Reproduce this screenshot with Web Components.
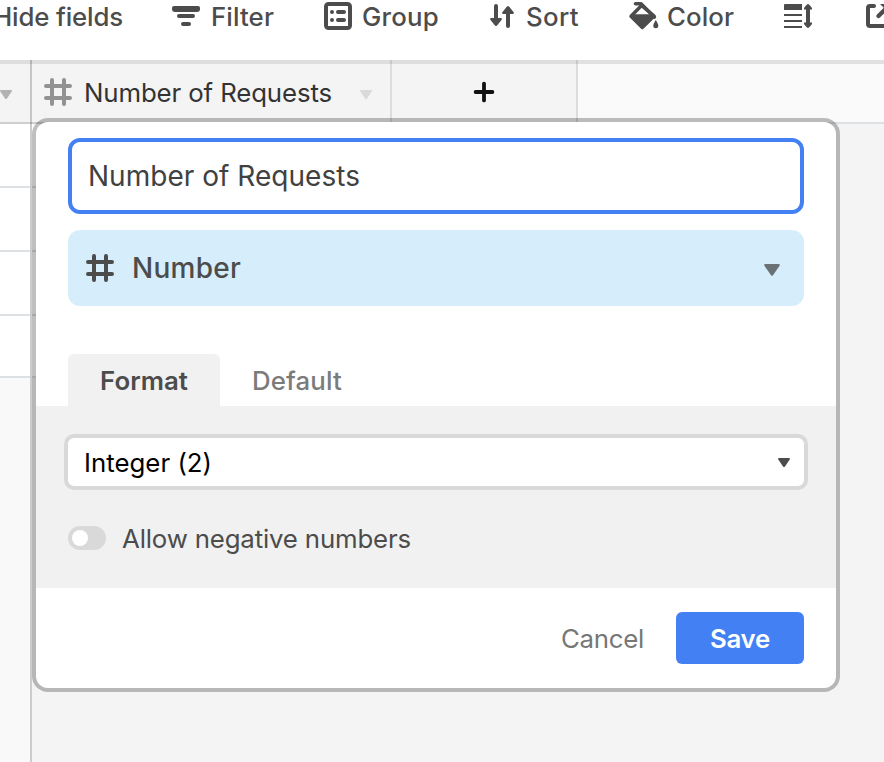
<!DOCTYPE html>
<html lang="en">
<head>
<meta charset="utf-8">
<title>Field editor</title>
<style>
html, body { margin: 0; }
body { width: 884px; height: 762px; overflow: hidden; background: #fff; font-family: Inter, "Liberation Sans", sans-serif; font-size: 25.8px; color: #4c4c4c; }
</style>
</head>
<body>
<app-page></app-page>
<script>
const define = (name, html, ready) => customElements.define(name, class extends HTMLElement {
  constructor() {
    super();
    const t = document.createElement('template');
    t.innerHTML = html;
    this.attachShadow({ mode: 'open' }).append(t.content.cloneNode(true));
  }
  connectedCallback() { if (ready) ready(this, this.shadowRoot); }
});

/* Label whose tracking is adjusted so that it fills the given width. */
define('fit-label', `<style>:host{display:block;white-space:pre;line-height:32px;flex:none}span{display:inline-block;vertical-align:top}</style><span><slot></slot></span>`,
  (el, root) => {
    const s = root.querySelector('span'), w = +el.getAttribute('w');
    el.style.width = w + 'px';
    s.style.letterSpacing = (w - s.getBoundingClientRect().width) / el.textContent.length + 'px';
  });

const ICONS = {
  filter: [28, 22, '<path d="M7 11h14M11 19h6" fill="none" stroke="currentColor" stroke-width="4" stroke-linecap="round"/><path d="M2 1h24q2 0 2 2v1q0 3-3 3H3Q0 7 0 4V3q0-2 2-2z" fill="currentColor"/>'],
  group: [28, 28, '<rect x="2" y="2" width="24" height="24" rx="2.5" fill="none" stroke="currentColor" stroke-width="4"/><path d="M14 10h6M14 18h6M8 10h.01M8 18h.01" fill="none" stroke="currentColor" stroke-width="4" stroke-linecap="round"/>'],
  sort: [24, 24, '<path d="M6 2v17M18 22V5" fill="none" stroke="currentColor" stroke-width="4" stroke-linecap="round"/><path d="M1 14h10q1.500 .5 .5 2L7 21.500q-1 1-2 0L.5 16q-1-1.500 .5-2zM13 10h10q1.500-.5 .5-2L19 2.500q-1-1-2 0L12.500 8q-1 1.500 .5 2z" fill="currentColor"/>'],
  paint: [30, 28, '<path d="M6.500 1.800H12L25.400 15" fill="none" stroke="currentColor" stroke-width="3.600" stroke-linecap="round" stroke-linejoin="round"/><path d="M12.500 3.500L2 14.300l11.300 11.200L25 14z" fill="none" stroke="currentColor" stroke-width="3.400" stroke-linejoin="round"/><path d="M2 12.300h23l1 2.200-12.700 12.400L.8 15z" fill="currentColor"/><path d="M26.800 18c1.500 2.700 2.500 4.200 2.500 5.700a2.500 2.500 0 0 1-5 0c0-1.500 1-3 2.500-5.700z" fill="currentColor"/>'],
  height: [28, 24, '<path d="M1 0h17v6H0V1q0-1 1-1zM0 10h18v2H0zM0 16h18v2H0zM0 22h18v2H0z" fill="currentColor"/><path d="M24 4v16" stroke="currentColor" stroke-width="4"/><path d="M24 0q1 0 4 4v1.500h-8V4q3-4 4-4zM24 24q-1 0-4-4v-1.500h8V20q-3 4-4 4z" fill="currentColor"/>'],
  share: [26, 24, '<path d="M8 2H4Q2 2 2 4v16q0 2 2 2h16q2 0 2-2v-6" fill="none" stroke="currentColor" stroke-width="4" stroke-linecap="round"/><path d="M12.500 12l8-8" stroke="currentColor" stroke-width="4.200" stroke-linecap="round"/><path d="M14 0h10v10z" fill="currentColor"/>'],
  hash: [28, 28, '<path d="M8 2v24M20 2v24M2 8h24M2 20h24" fill="none" stroke="currentColor" stroke-width="4" stroke-linecap="round"/>'],
  plus: [20, 20, '<path d="M10 1.600v16.800M1.600 10h16.800" stroke="currentColor" stroke-width="3.800" stroke-linecap="round"/>'],
  caret: [12, 9, '<path d="M.8 0h10.400q1.200.3.500 1.500L7 8.400Q6 9.500 5 8.400L.3 1.500Q-.4.3.8 0z" fill="currentColor"/>'],
  bigcaret: [16, 12, '<path d="M1 0h14q1.500.4.600 1.800L9 11.200q-1 1.200-2 0L.4 1.800Q-.5.4 1 0z" fill="currentColor"/>']
};
define('ui-icon', `<style>:host{display:block;flex:none}svg{display:block;overflow:visible}</style><svg aria-hidden="true"></svg>`,
  (el, root) => {
    const [w, h, body] = ICONS[el.getAttribute('name')], s = root.querySelector('svg');
    s.setAttribute('width', w); s.setAttribute('height', h); s.setAttribute('viewBox', `0 0 ${w} ${h}`);
    s.innerHTML = body;
  });

define('tool-bar', `<style>
:host{display:flex;align-items:flex-start;height:60px;box-sizing:border-box;overflow:hidden;font-weight:500;background:#fff;color:#4c4c4c}
.item{display:flex;align-items:flex-start;flex:none}
fit-label{margin-top:1px}
</style>
<div class="item" style="margin-left:-7px"><fit-label w="130">Hide fields</fit-label></div>
<div class="item" style="margin-left:49px;gap:11px"><ui-icon name="filter" style="margin-top:5px"></ui-icon><fit-label w="63">Filter</fit-label></div>
<div class="item" style="margin-left:50px;gap:10px"><ui-icon name="group" style="margin-top:2px"></ui-icon><fit-label w="77">Group</fit-label></div>
<div class="item" style="margin-left:51px;gap:12px"><ui-icon name="sort" style="margin-top:4px"></ui-icon><fit-label w="53">Sort</fit-label></div>
<div class="item" style="margin-left:50px;gap:8px"><ui-icon name="paint" style="margin-top:2px"></ui-icon><fit-label w="67">Color</fit-label></div>
<div class="item" style="margin-left:50px"><ui-icon name="height" style="margin-top:4px"></ui-icon></div>
<div class="item" style="margin-left:54px"><ui-icon name="share" style="margin-top:4px"></ui-icon></div>`);

define('grid-head', `<style>
:host{display:flex;height:64px;box-sizing:border-box;background:linear-gradient(#dedede 4px,#f4f4f4 4px 62px,#cfcfcf 62px)}
div{display:flex;align-items:center;box-sizing:border-box;border-right:2px solid rgba(0,10,20,.1);padding-top:2px}
.prev{width:32px;border-color:rgba(0,0,0,.19);color:#b2b2b2}
.prev ui-icon,.c{margin-top:2px}
.field{width:360px;padding-left:12px;color:#929292}
.field fit-label{margin-left:12px;color:#333}
.field .c{margin-left:28px;color:#dadada}
.add{width:186px;padding-left:82px;color:#111}
.rest{flex:1;border:0;background:linear-gradient(#e1e1e1 4px,#fafafa 4px 62px,#dde1e4 62px)}
</style>
<div class="prev"><ui-icon name="caret"></ui-icon></div>
<div class="field"><ui-icon name="hash" style="margin-top:-2px"></ui-icon><fit-label w="248">Number of Requests</fit-label><ui-icon class="c" name="caret"></ui-icon></div>
<div class="add"><ui-icon name="plus" style="margin-top:-2px"></ui-icon></div>
<div class="rest"></div>`);

define('grid-body', `<style>
:host{display:flex;height:638px;background:#f4f4f4}
.a{width:30px;border-right:2px solid #ccc;background:#f9f9f9}
.b{width:358px}
i{display:block;box-sizing:border-box;height:64px;border-bottom:2px solid #dde1e4;background:#fff}
i:last-child{height:62px}
</style>
<div class="a"><i></i><i></i><i></i><i></i></div><div class="b"><i></i><i></i><i></i><i></i></div>`);

define('type-picker', `<style>
:host{display:flex;align-items:center;height:76px;border-radius:12px;background:#d6eefc;padding:0 24px 0 18px;box-sizing:border-box;color:#4c4c4c;font-size:28px;font-weight:500}
fit-label{margin:0 auto 0 18px}
.c{color:#6b7275;margin-top:4px}
</style><ui-icon name="hash"></ui-icon><fit-label w="109">Number</fit-label><ui-icon class="c" name="bigcaret"></ui-icon>`);

define('name-input', `<style>
:host{display:flex;align-items:center;height:76px;box-sizing:border-box;border:4px solid #4280f4;border-radius:12px;background:#fff;padding:0 16px;font-size:28px;color:#414141}
</style><slot></slot>`);

define('format-tabs', `<style>
:host{display:flex;height:52px;font-weight:600;color:#4c4c4c}
div{display:flex;align-items:center;padding:2px 32px 0;box-sizing:border-box}
.on{width:152px;background:#f1f1f1;border-radius:6px 6px 0 0}
.off{color:#7b7b7b;font-weight:500}
</style><div class="on"><fit-label w="88">Format</fit-label></div><div class="off"><fit-label w="90">Default</fit-label></div>`);

define('format-panel', `<style>
:host{display:flex;flex-direction:column;box-sizing:border-box;height:182px;background:#f1f1f1;padding:28px}
.select{display:flex;align-items:center;justify-content:space-between;height:56px;box-sizing:border-box;border:4px solid #d9d9d9;border-radius:10px;background:#fff;padding:2px 14px 0 16px;color:#000}
.select ui-icon{color:#4c4c4c;margin-top:-1px}
.toggle{display:flex;align-items:center;height:24px;margin:36px 0 0 4px;gap:16px}
.sw{display:flex;width:38px;height:24px;border-radius:12px;background:#d9d9d9;padding:4px;box-sizing:border-box}
.sw::before{content:"";width:16px;height:16px;border-radius:50%;background:#fff}
.toggle fit-label{padding-top:2px}
</style>
<div class="select"><fit-label w="128">Integer (2)</fit-label><ui-icon name="caret"></ui-icon></div>
<div class="toggle"><span class="sw"></span><fit-label w="289">Allow negative numbers</fit-label></div>`);

define('action-bar', `<style>
:host{display:flex;justify-content:flex-end;align-items:center;height:100px;padding:0 32px;gap:32px;box-sizing:border-box}
.cancel{padding-top:2px;color:#777}
.save{display:flex;align-items:center;justify-content:center;box-sizing:border-box;width:128px;height:52px;padding-top:2px;border-radius:6px;background:#4280f4;color:#fff;font-weight:600}
</style><div class="cancel"><fit-label w="83">Cancel</fit-label></div><div class="save"><fit-label w="60">Save</fit-label></div>`);

define('field-popover', `<style>
:host{position:absolute;left:32px;top:118px;width:808px;height:574px;box-sizing:border-box;border:4px solid rgba(0,0,0,.25);border-radius:16px;background:#fff;background-clip:padding-box;overflow:hidden}
.top{display:flex;flex-direction:column;gap:16px;padding:16px 32px 0}
format-tabs{margin-top:32px}
</style>
<div class="top">
<name-input><fit-label w="272">Number of Requests</fit-label></name-input>
<type-picker></type-picker>
<format-tabs></format-tabs>
</div>
<format-panel></format-panel>
<action-bar></action-bar>`);

define('app-page', `<style>:host{display:block;position:relative;width:884px;height:762px;overflow:hidden}</style>
<tool-bar></tool-bar><grid-head></grid-head><grid-body></grid-body><field-popover></field-popover>`);
</script>
</body>
</html>
